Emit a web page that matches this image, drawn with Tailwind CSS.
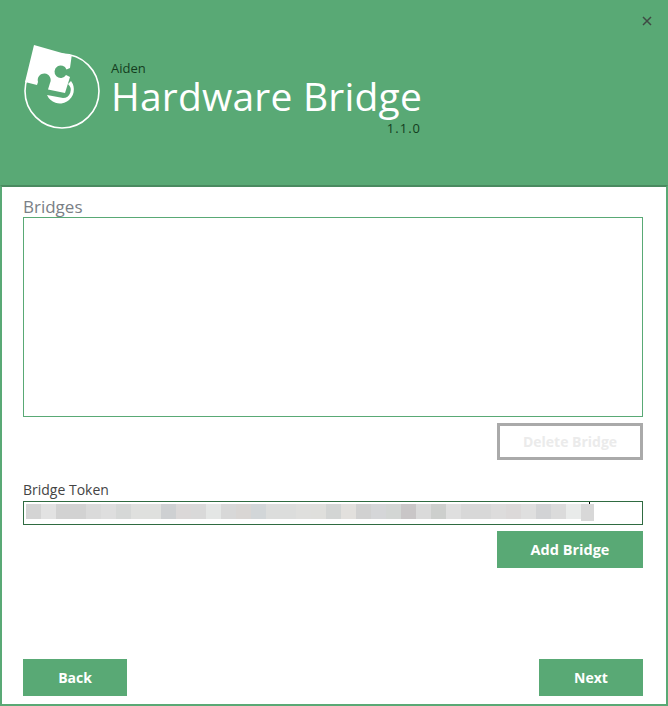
<!DOCTYPE html>
<html lang="en">
  <head>
    <meta charset="UTF-8" />
    <title>Hardware Bridge</title>
    <script src="https://cdn.jsdelivr.net/npm/@tailwindcss/browser@4"></script>
  </head>
  <body class="w-[668px] h-[706px] overflow-hidden bg-[#59a975] font-['Open_Sans','Noto_Sans',sans-serif]">
    <header class="relative h-[185px] flex items-start pl-[23px] pt-[44px]">
      <svg class="w-[78px] h-[85px] shrink-0" viewBox="23 44 78 85">
        <circle cx="62" cy="91" r="37" fill="none" stroke="#fff" stroke-width="1.6" />
        <path fill="#fff" d="M34 45L71.7 55.7L70 68L66.5 69.5A6.2 6.2 0 1 0 66 75L70 77L65 93L48 89.5L50 83A6.5 6.5 0 1 0 38 82L37 85L25 82Z" />
        <path fill="#fff" d="M71 81A14 14 0 1 1 47 95L63 98A8 8 0 0 0 68 84Z" />
      </svg>
      <div class="ml-[10px] mt-[16px] w-[310px] text-white">
        <div class="text-[13px] leading-[16px] text-[#143d1e]">Aiden</div>
        <div class="text-[39px] leading-[40px] font-normal tracking-[0.2px] whitespace-nowrap">Hardware Bridge</div>
        <div class="text-[13px] leading-[16px] mt-[4px] text-right tracking-[1px] text-[#143d1e]">1.1.0</div>
      </div>
      <button class="absolute top-[12px] right-[12px] w-[18px] h-[18px] flex items-center justify-center">
        <svg class="w-[10px] h-[10px]" viewBox="0 0 10 10" stroke="#3f4a44" stroke-width="1.5"><path d="M1 1L9 9M9 1L1 9" /></svg>
      </button>
    </header>
    <main class="h-[521px] bg-white border-2 border-[#59a975] border-t-[#4a8a60] pl-[21px] pr-[23px] flex flex-col">
      <div class="text-[17px] leading-[20px] mt-[10px] text-[#7a7f86]">Bridges</div>
      <div class="h-[200px] border border-[#59a975] bg-white"></div>
      <button class="self-end mt-[6px] w-[146px] h-[37px] border-[3px] border-[#aaaaaa] bg-white text-[14px] font-bold text-[#ebebeb]">Delete Bridge</button>
      <label class="mt-[20px] mb-[1px] text-[14px] leading-[20px] text-[#444]">Bridge Token</label>
      <div class="relative h-[24px] border border-[#2f6b41] bg-white pl-[2px] pt-[2px] flex">
        <div class="absolute left-[565px] top-0 w-px h-[2px] bg-black"></div>
        <div class="flex h-[15px]">
          <div class="w-[15px] bg-[#d4d4d4]"></div><div class="w-[15px] bg-[#e2e2e2]"></div><div class="w-[30px] bg-[#d2d2d2]"></div><div class="w-[15px] bg-[#dadada]"></div><div class="w-[15px] bg-[#dedede]"></div><div class="w-[15px] bg-[#d6d8d7]"></div><div class="w-[30px] bg-[#dfe0de]"></div><div class="w-[15px] bg-[#ced0d2]"></div><div class="w-[15px] bg-[#dbd8d8]"></div><div class="w-[15px] bg-[#d9d9d9]"></div><div class="w-[15px] bg-[#e4e6e5]"></div><div class="w-[15px] bg-[#d8d8d8]"></div><div class="w-[15px] bg-[#d9d6d4]"></div><div class="w-[15px] bg-[#d2d6d8]"></div><div class="w-[30px] bg-[#dcdddc]"></div><div class="w-[15px] bg-[#dfdfdd]"></div><div class="w-[15px] bg-[#dfdfdc]"></div><div class="w-[15px] bg-[#d3d5d4]"></div><div class="w-[15px] bg-[#e2e0dd]"></div><div class="w-[15px] bg-[#d1d1d1]"></div><div class="w-[15px] bg-[#d5d6d8]"></div><div class="w-[15px] bg-[#d3d6d4]"></div><div class="w-[15px] bg-[#c9c6c7]"></div><div class="w-[15px] bg-[#dadada]"></div><div class="w-[15px] bg-[#cdcfcd]"></div><div class="w-[15px] bg-[#dfdfdf]"></div><div class="w-[30px] bg-[#d8d8d8]"></div><div class="w-[15px] bg-[#dddcdc]"></div><div class="w-[15px] bg-[#dcd9d9]"></div><div class="w-[15px] bg-[#dfdfdf]"></div><div class="w-[15px] bg-[#d2d3d5]"></div><div class="w-[15px] bg-[#dbdbdb]"></div><div class="w-[15px] bg-[#e9ebea]"></div><div class="w-[13px] h-[17px] bg-[#d8d8d8]"></div>
        </div>
      </div>
      <button class="self-end mt-[6px] w-[146px] h-[37px] bg-[#59a975] text-[14.5px] font-bold text-white">Add Bridge</button>
      <div class="mt-auto mb-[8px] flex justify-between">
        <button class="w-[104px] h-[37px] bg-[#59a975] text-[14px] font-bold text-white">Back</button>
        <button class="w-[104px] h-[37px] bg-[#59a975] text-[14px] font-bold text-white">Next</button>
      </div>
    </main>
  </body>
</html>
